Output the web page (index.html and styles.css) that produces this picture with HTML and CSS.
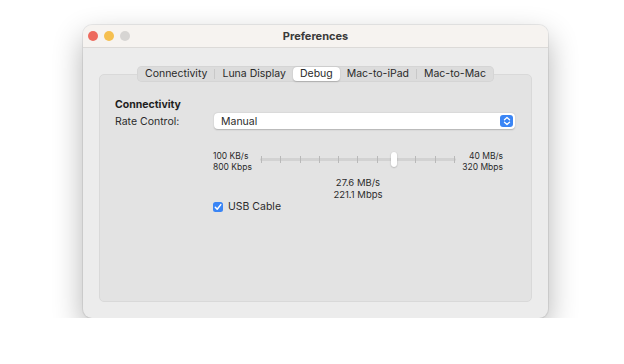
FILE: index.html
```html
<!DOCTYPE html>
<html lang="en">
<head>
    <meta charset="UTF-8">
    <title>Preferences</title>
    <link rel="stylesheet" href="styles.css">
</head>
<body>
    <div class="window">
        <div class="titlebar">
            <div class="lights">
                <span class="light light-red"></span>
                <span class="light light-yellow"></span>
                <span class="light light-gray"></span>
            </div>
            <div class="title">Preferences</div>
        </div>
        <div class="content">
            <div class="tabs">
                <span class="tab">Connectivity</span>
                <span class="sep"></span>
                <span class="tab">Luna Display</span>
                <span class="tab tab-active">Debug</span>
                <span class="tab">Mac-to-iPad</span>
                <span class="sep"></span>
                <span class="tab">Mac-to-Mac</span>
            </div>
            <div class="panel">
                <div class="heading">Connectivity</div>
                <div class="row">
                    <span class="label">Rate Control:</span>
                    <div class="popup">
                        <span>Manual</span>
                        <span class="popup-btn">
                            <svg width="8" height="10" viewBox="0 0 8 10">
                                <path d="M1.5 3.8 L4 1.5 L6.5 3.8 M1.5 6.2 L4 8.5 L6.5 6.2" fill="none" stroke="#fff" stroke-width="1.3" stroke-linecap="round" stroke-linejoin="round"/>
                            </svg>
                        </span>
                    </div>
                </div>
                <div class="slider-block">
                    <div class="slider">
                        <div class="range-label">100 KB/s<br>800 Kbps</div>
                        <div class="track">
                            <div class="ticks">
                                <i></i><i></i><i></i><i></i><i></i><i></i><i></i><i></i><i></i><i></i><i></i>
                            </div>
                            <span class="knob" style="left: 68.2%"></span>
                        </div>
                        <div class="range-label range-right">40 MB/s<br>320 Mbps</div>
                    </div>
                    <div class="value">27.6 MB/s<br>221.1 Mbps</div>
                    <label class="check">
                        <span class="box">
                            <svg width="8" height="8" viewBox="0 0 8 8">
                                <path d="M1.3 4.2 L3.2 6.2 L6.8 1.6" fill="none" stroke="#fff" stroke-width="1.5" stroke-linecap="round" stroke-linejoin="round"/>
                            </svg>
                        </span>
                        USB Cable
                    </label>
                </div>
            </div>
        </div>
    </div>
</body>
</html>
```

FILE: styles.css
```css
body {
    margin: 0;
    background: #fff;
    font-family: Inter, "Noto Sans", sans-serif;
    color: #2b2b2b;
}

.window {
    width: 465px;
    height: 293px;
    margin: 25px 0 0 83px;
    border-radius: 9px;
    background: #ececec;
    box-shadow: 0 0 0 1px rgba(0,0,0,0.07), 0 12px 30px rgba(0,0,0,0.3);
    overflow: hidden;
    display: flex;
    flex-direction: column;
}

.titlebar {
    height: 22px;
    background: #f6f3f0;
    border-bottom: 1px solid #dcdad8;
    position: relative;
    display: flex;
    align-items: center;
    justify-content: center;
}

.lights {
    position: absolute;
    left: 5px;
    top: 6px;
    display: flex;
    gap: 6px;
}

.light {
    width: 10px;
    height: 10px;
    border-radius: 50%;
}
.light-red { background: #ed6a5e; }
.light-yellow { background: #f5bf4f; }
.light-gray { background: #d7d5d3; }

.title {
    font-size: 11px;
    font-weight: 700;
    color: #3a3a3a;
}

.content {
    flex: 1;
    display: flex;
    flex-direction: column;
    padding: 18px 16px 16px 16px;
}

.tabs {
    align-self: center;
    display: flex;
    align-items: center;
    height: 16px;
    padding: 0 1px;
    background: #dcdcdc;
    border-radius: 5px;
    box-shadow: inset 0 0 0 0.5px rgba(0,0,0,0.06);
    position: relative;
    z-index: 1;
    font-size: 10.5px;
}

.tab {
    padding: 0 7px;
    line-height: 14px;
    color: #2a2a2a;
    border-radius: 4px;
}

.tab-active {
    background: #fff;
    box-shadow: 0 0.5px 1.5px rgba(0,0,0,0.2);
}

.sep {
    width: 1px;
    height: 10px;
    background: #c8c8c8;
}

.panel {
    flex: 1;
    margin-top: -8px;
    background: #e3e3e3;
    border: 1px solid #d9d9d9;
    border-radius: 5px;
    padding: 23px 15px 0 15px;
    font-size: 10.5px;
}

.heading {
    font-weight: 700;
    line-height: 14px;
    color: #1f1f1f;
}

.row {
    display: flex;
    align-items: center;
    margin-top: 1px;
}

.label {
    width: 99px;
}

.popup {
    flex: 1;
    height: 16px;
    margin-right: 1px;
    background: #fff;
    border-radius: 4px;
    box-shadow: 0 0.5px 1.5px rgba(0,0,0,0.22);
    display: flex;
    align-items: center;
    justify-content: space-between;
    padding: 0 2px 0 7px;
}

.popup-btn {
    width: 13px;
    height: 12px;
    background: #3a85f5;
    border-radius: 3px;
    display: flex;
    align-items: center;
    justify-content: center;
}

.slider-block {
    margin: 22px 0 0 98px;
    width: 290px;
    display: flex;
    flex-direction: column;
}

.slider {
    display: flex;
    align-items: center;
}

.range-label {
    font-size: 8.5px;
    line-height: 11px;
    width: 47px;
}

.range-right {
    text-align: right;
}

.track {
    flex: 1;
    height: 3px;
    background: #d2d2d2;
    border-radius: 2px;
    position: relative;
    margin-top: -6px;
}

.ticks {
    position: absolute;
    left: 1px;
    right: 1px;
    top: -2px;
    display: flex;
    justify-content: space-between;
}

.ticks i {
    width: 1px;
    height: 7px;
    background: #b9b9b9;
}

.knob {
    position: absolute;
    top: -6px;
    width: 6px;
    height: 15px;
    margin-left: -3px;
    background: #fff;
    border-radius: 3px;
    box-shadow: 0 0.5px 1.5px rgba(0,0,0,0.3);
}

.value {
    text-align: center;
    font-size: 9.5px;
    line-height: 12px;
    margin-top: 4px;
}

.check {
    display: flex;
    align-items: center;
    gap: 5px;
    margin-top: -1px;
    font-size: 10.5px;
}

.box {
    width: 10px;
    height: 10px;
    border-radius: 2.5px;
    background: #3a85f5;
    display: flex;
    align-items: center;
    justify-content: center;
}
```
